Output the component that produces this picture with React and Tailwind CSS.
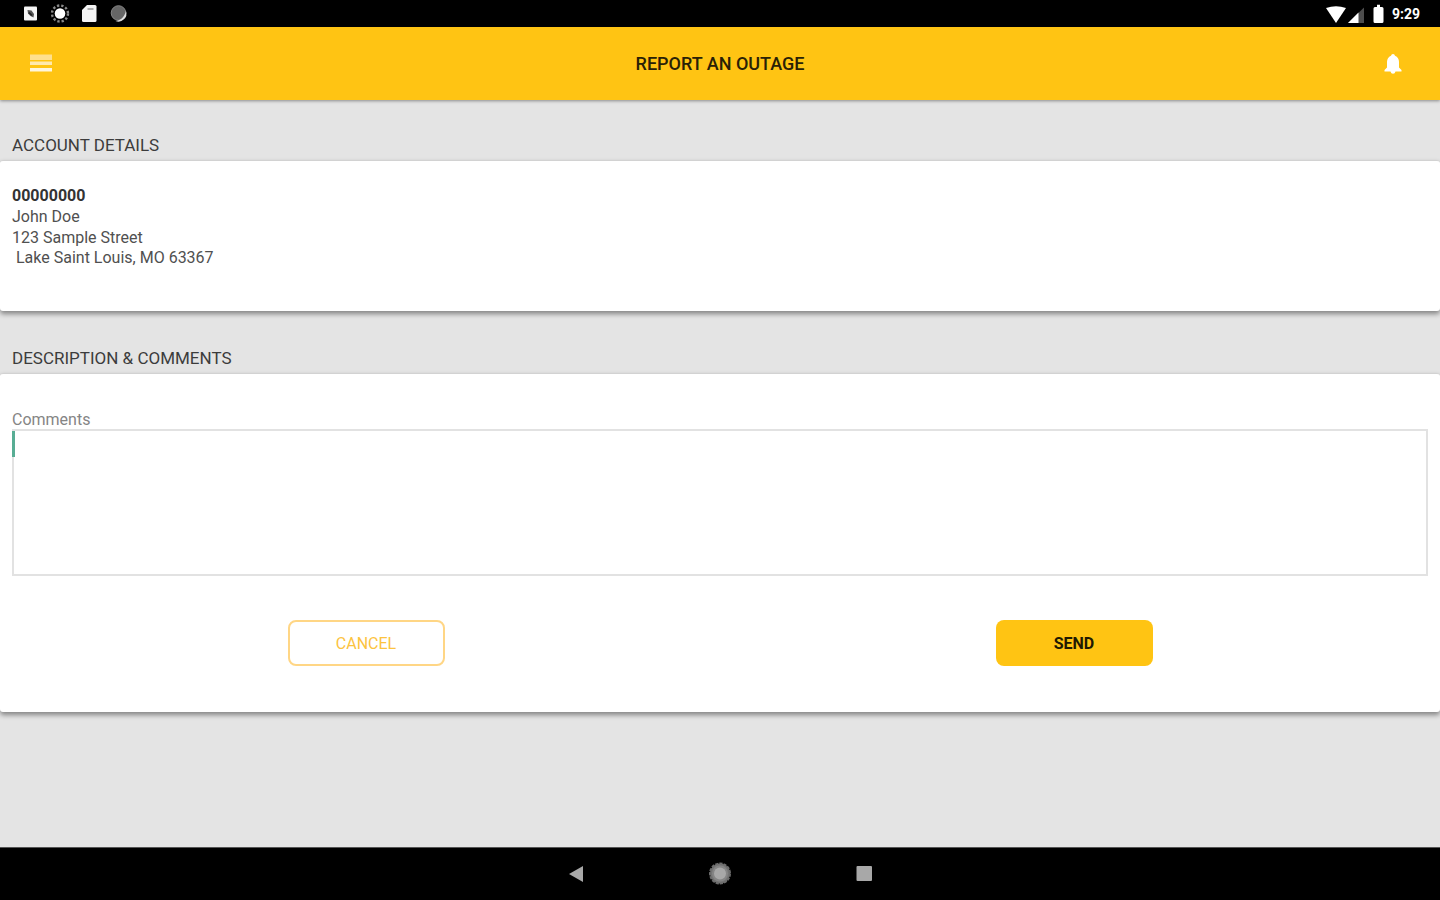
function StatusBar() {
  return (
    <div className="flex h-[27px] shrink-0 items-center justify-between bg-black pr-[17px] pl-[23px] text-white">
      <div className="flex items-center gap-[14px]">
        <svg className="size-[15px] overflow-visible" viewBox="0 0 15 15" aria-hidden="true">
          <rect x="1" y="0.500" width="13" height="14" rx="1" fill="#f5f5f5" />
          <path d="M4.500 4l4 .5 2.500 3.500-.5 3.500-3-1.500-2.500-2.500z" fill="#555" />
          <path d="M6 6.500l3 3" stroke="#222" strokeWidth="1.500" />
        </svg>
        <svg className="size-[15px] overflow-visible" viewBox="0 0 15 15" aria-hidden="true">
          <circle cx="8" cy="7.500" r="8" fill="none" stroke="#8a8a8a" strokeWidth="2.400" strokeDasharray="2.300 2" />
          <circle cx="8" cy="7.500" r="5.300" fill="#fff" />
        </svg>
        <svg className="size-[15px] overflow-visible" viewBox="0 0 15 15" aria-hidden="true">
          <path d="M6-1h8q1.500 0 1.500 1.500v14q0 1.500-1.500 1.500H2.500Q1 16 1 14.500V4z" fill="#f5f5f5" />
          <path d="M6.500 3h6" stroke="#999" strokeWidth="1.500" />
        </svg>
        <svg className="size-[15px] overflow-visible" viewBox="0 0 15 15" aria-hidden="true">
          <circle cx="8.500" cy="7" r="7.300" fill="#666" stroke="#858585" strokeWidth="1" />
          <path d="M16 5a8 8 0 0 1-10.500 10c4 0 9-3.500 10.500-10z" fill="#dedede" />
        </svg>
      </div>
      <div className="flex items-center">
        <svg className="h-[20px] w-[64px]" viewBox="0 0 64 20" aria-hidden="true">
          <path d="M1 4Q11 .5 21 4L11 19z" fill="#fff" />
          <path d="M39 3.500V19H23z" fill="#4d4d4d" />
          <path d="M33.500 8.500V19H23z" fill="#fff" />
          <path d="M52 .8h3v2.200h2q1.500 0 1.500 1.500v13q0 1.500-1.500 1.500h-7q-1.500 0-1.500-1.500v-13Q48.500 3 50 3h2z" fill="#fff" />
        </svg>
        <time className="ml-[3px] w-[31px] text-sm leading-4 font-bold">9:29</time>
      </div>
    </div>
  );
}

function Header() {
  return (
    <header className="z-10 grid h-[73px] shrink-0 grid-cols-[1fr_auto_1fr] items-center bg-[#ffc413] px-[30px] shadow-[0_1px_3px_rgba(0,0,0,0.4)]">
      <button type="button" aria-label="Open menu" className="w-[22px]">
        <svg className="h-[20px] w-[22px]" viewBox="0 0 22 20" aria-hidden="true">
          <rect y="0.500" width="22" height="5.500" fill="#ffe08e" />
          <rect y="7.500" width="22" height="3.500" fill="#ffe9ad" />
          <rect y="14" width="22" height="3.500" fill="#fff6dc" />
        </svg>
      </button>
      <h1 className="text-lg leading-6 font-medium text-[#292106]">REPORT AN OUTAGE</h1>
      <button type="button" aria-label="Notifications" className="mr-[7px] w-[20px] justify-self-end">
        <svg className="h-[20px] w-[20px]" viewBox="0 0 20 20" aria-hidden="true">
          <path d="M10 0q1.700 0 2 1.800Q16 3.500 16 8v5.500l2.500 2.500v1.500h-17V16L4 13.500V8q0-4.500 4-6.200Q8.300 0 10 0zM7.500 17.400h5Q12 19.800 10 19.800t-2.500-2.400z" fill="#fff" />
        </svg>
      </button>
    </header>
  );
}

function SectionTitle({ children }) {
  return <h2 className="px-3 pb-[3px] text-[17px] leading-6 text-[#3c3c3c]">{children}</h2>;
}

const cardClass =
  "rounded-[3px] border-t border-[#d2d2d2] bg-white shadow-[0_3px_5px_rgba(0,0,0,0.42)]";

export default function App() {
  return (
    <div className="flex min-h-screen flex-col bg-[#e4e4e4] font-['Roboto',sans-serif]">
      <StatusBar />
      <Header />
      <main className="flex-1 pb-6">
        <section className="pt-[33px]">
          <SectionTitle>ACCOUNT DETAILS</SectionTitle>
          <div className={cardClass}>
            <address className="px-3 pt-[25px] pb-[43px] text-base leading-5 text-[#505050] not-italic">
              <p className="pb-px font-bold text-[#333]">00000000</p>
              <p className="pb-px">John Doe</p>
              <p>123 Sample Street</p>
              <p className="pl-1">Lake Saint Louis, MO 63367</p>
            </address>
          </div>
        </section>
        <section className="pt-[35px]">
          <SectionTitle>DESCRIPTION &amp; COMMENTS</SectionTitle>
          <form className={cardClass} onSubmit={(event) => event.preventDefault()}>
            <div className="px-3 pt-[37px] pb-[46px]">
              <label htmlFor="comments" className="block text-base leading-[18px] text-[#858585]">
                Comments
              </label>
              <div className="relative">
                <textarea
                  id="comments"
                  className="block h-[147px] w-full resize-none border-2 border-[#e2e2e2] bg-white p-1 text-base outline-none"
                />
                <span className="absolute top-0.5 left-0 h-[26px] w-[3px] bg-[#58ad94]" />
              </div>
              <div className="grid grid-cols-2 justify-items-center pt-11">
                <button
                  type="button"
                  className="h-[46px] w-[157px] rounded-lg border-2 border-[#ffd685] bg-white pt-0.5 text-base text-[#fcc33f]"
                >
                  CANCEL
                </button>
                <button
                  type="submit"
                  className="h-[46px] w-[157px] rounded-lg bg-[#ffc413] pt-0.5 text-base font-bold text-[#211a02]"
                >
                  SEND
                </button>
              </div>
            </div>
          </form>
        </section>
      </main>
      <nav className="flex h-[53px] shrink-0 items-center justify-center gap-[120px] border-t border-[#555] bg-black">
        <button type="button" aria-label="Back" className="size-6">
          <svg className="size-6" viewBox="0 0 24 24" aria-hidden="true">
            <path d="M19 4v16L5 12z" fill="#a8a8a8" />
          </svg>
        </button>
        <button type="button" aria-label="Home" className="size-6">
          <svg className="size-6" viewBox="0 0 24 24" aria-hidden="true">
            <circle cx="12" cy="11.500" r="10" fill="#747474" stroke="#6c6c6c" strokeWidth="2" strokeDasharray="3.200 1" />
            <circle cx="12" cy="11.500" r="8" fill="#858585" />
            <circle cx="12" cy="11.500" r="6" fill="#a8a8a8" />
          </svg>
        </button>
        <button type="button" aria-label="Recent apps" className="size-6">
          <svg className="size-6" viewBox="0 0 24 24" aria-hidden="true">
            <rect x="4.500" y="4" width="15.500" height="15" rx="1" fill="#a8a8a8" />
          </svg>
        </button>
      </nav>
    </div>
  );
}
